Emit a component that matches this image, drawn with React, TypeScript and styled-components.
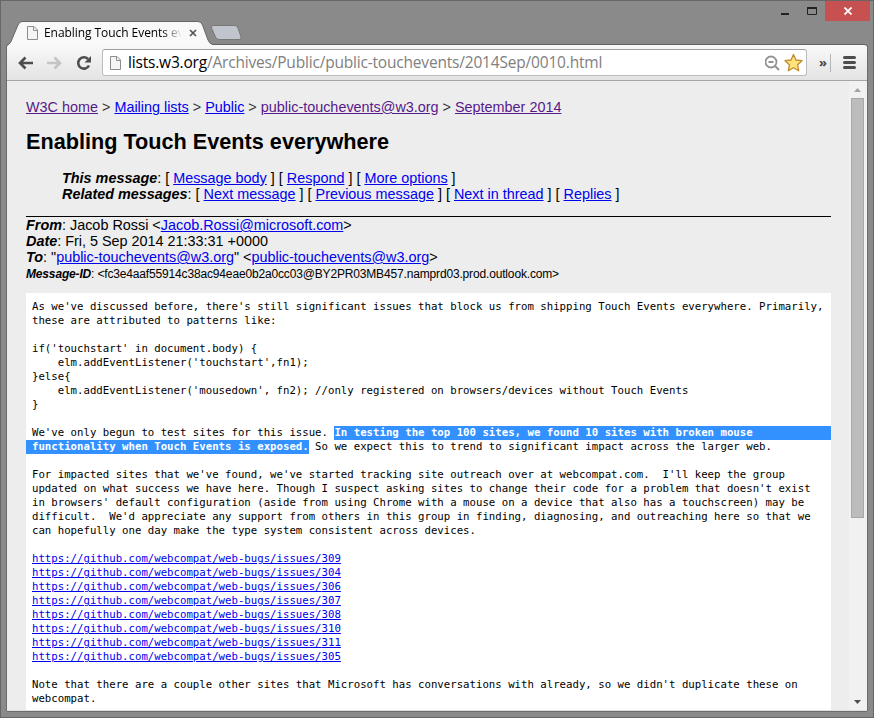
import React from 'react';
import styled, { createGlobalStyle, css } from 'styled-components';

const GlobalStyle = createGlobalStyle`
  * { box-sizing: border-box; }
  body { margin: 0; background: #8a8a8a; overflow: hidden; }
`;

const Window = styled.div`
  width: 874px;
  height: 718px;
  display: flex;
  flex-direction: column;
  padding: 0 6px 6px;
  background: #8a8a8a;
  border: 1px solid #666;
  overflow: hidden;
  font-family: "Liberation Sans", Arial, sans-serif;
`;

const TitleBar = styled.header`
  height: 43px;
  flex: none;
  display: flex;
  justify-content: space-between;
  align-items: flex-end;
`;

const Tabs = styled.div`
  display: flex;
  align-items: flex-end;
  height: 24px;
`;

const Tab = styled.div`
  position: relative;
  width: 205px;
  height: 24px;
  margin-bottom: -1px;
  padding: 0 0 0 19px;
  display: flex;
  align-items: center;
`;

const TabShape = styled.svg`
  position: absolute;
  left: 0;
  top: 0;
`;

const TabTitle = styled.span`
  position: relative;
  width: 137px;
  margin: 0 8px 0 5px;
  overflow: hidden;
  white-space: nowrap;
  font: 12px/18px "Open Sans", sans-serif;
  letter-spacing: -0.06px;
  color: #000;
  mask-image: linear-gradient(to right, #000 118px, transparent 138px);
`;

const Icon = styled.svg`
  position: relative;
  flex: none;
  display: block;
`;

const NewTab = styled.svg`
  margin: 0 0 3px -2px;
`;

const Controls = styled.div`
  display: flex;
  align-self: flex-start;
  margin-right: -3px;
`;

const Control = styled.div<{ $w: number; $close?: boolean }>`
  width: ${p => p.$w}px;
  height: 20px;
  display: flex;
  align-items: center;
  justify-content: center;
  background: ${p => (p.$close ? '#c75050' : 'transparent')};
`;

const Toolbar = styled.div`
  height: 37px;
  flex: none;
  display: flex;
  align-items: center;
  padding: 0 11px 0 11px;
  background: linear-gradient(#f9f9f9, #e3e3e3);
  border-top: 1px solid #636363;
  border-bottom: 1px solid #a5a5a5;
  border-radius: 3px 3px 0 0;
  box-shadow: -1px 0 #6c6c6c, 1px 0 #6c6c6c;
`;

const NavButtons = styled.div`
  display: flex;
  gap: 13px;
  align-items: center;
  width: 84px;
  flex: none;
`;

const Omnibox = styled.div`
  width: 705px;
  height: 27px;
  flex: none;
  display: flex;
  align-items: center;
  padding: 0 3px 0 6px;
  background: #fff;
  border: 1px solid #bdbdbd;
  border-top-color: #a0a0a0;
  border-radius: 3px;
`;

const Url = styled.span`
  flex: 1;
  margin-left: 6px;
  padding-bottom: 1px;
  white-space: nowrap;
  font: 15.5px/24px "Open Sans", sans-serif;
  letter-spacing: -0.19px;
  color: #808080;
  b { font-weight: 400; color: #000; }
`;

const Overflow = styled.span`
  width: 24px;
  padding: 0 0 1px 12px;
  font: bold 13px/16px "Open Sans", sans-serif;
  color: #444;
`;

const Divider = styled.i`
  width: 1px;
  height: 18px;
  margin: 0 12px 0 0;
  background: #b5b5b5;
`;

const Viewport = styled.div`
  flex: 1;
  min-height: 0;
  display: flex;
  background: #ededed;
  border-bottom: 1px solid #ddd;
  box-shadow: -1px 0 #6c6c6c, 1px 0 #6c6c6c, 0 1px #6c6c6c;
`;

const Page = styled.main`
  flex: 1;
  min-width: 0;
  padding: 18px 18px 0 19px;
  overflow: hidden;
  font-size: 14.4px;
  line-height: 16px;
  color: #000;
  white-space: nowrap;
`;

const Link = styled.a<{ $visited?: boolean }>`
  color: ${p => (p.$visited ? '#551a8b' : '#0000ee')};
  text-decoration: underline;
`;

const Crumbs = styled.nav`
  height: 16px;
  color: #333;
`;

const Title = styled.h1`
  margin: 14px 0 16px;
  font: bold 21.67px/25px "Liberation Sans", sans-serif;
`;

const MessageLinks = styled.div`
  padding-left: 36px;
  margin-bottom: 14px;
`;

const Headers = styled.div`
  border-top: 1px solid #000;
  margin-bottom: 12px;
`;

const Row = styled.div<{ $small?: boolean }>`
  height: 16px;
  ${p => p.$small && css`
    font-size: 12px;
    line-height: 18px;
    letter-spacing: -0.16px;
  `}
`;

const Label = styled.b`
  font-style: italic;
`;

const Body = styled.pre`
  margin: 0;
  height: 430px;
  padding: 7px 0 0 6px;
  background: #fff;
  font: 10.69px/14px "DejaVu Sans Mono", monospace;
`;

const Line = styled.div<{ $selectedEnd?: boolean; $selectedStart?: boolean }>`
  height: 14px;
  ${p => p.$selectedEnd && css`background: linear-gradient(#3390ff, #3390ff) 302px 0 no-repeat;`}
  ${p => p.$selectedStart && css`margin-left: -6px; padding-left: 6px; background: linear-gradient(#3390ff, #3390ff) 0 0 / 8px 14px no-repeat;`}
`;

const Selected = styled.strong`
  display: inline-block;
  height: 14px;
  background: #3390ff;
  color: #fff;
`;

const ScrollBar = styled.div`
  width: 18px;
  flex: none;
  padding: 0 3px 0 1px;
  display: flex;
  flex-direction: column;
  align-items: center;
  background: #f1f1f1;
`;

const ArrowBox = styled.div`
  height: 17px;
  display: flex;
  align-items: center;
`;

const Thumb = styled.div`
  width: 13px;
  height: 420px;
  margin-bottom: auto;
  background: #bcbcbc;
  border: 1px solid #a8a8a8;
`;

const PageIcon = () => (
  <Icon width="13" height="16" viewBox="0 0 13 16">
    <path d="M1.5 1.5h6.5l3.5 3.5v9.5h-10z" fill="#f5f5f5" stroke="#8d8d8d" />
    <path d="M7.5 1.5v4h4" fill="none" stroke="#8d8d8d" />
  </Icon>
);

const issues = [309, 304, 306, 307, 308, 310, 311, 305];

const intro = [
  "As we've discussed before, there's still significant issues that block us from shipping Touch Events everywhere. Primarily,",
  'these are attributed to patterns like:',
  '',
  "if('touchstart' in document.body) {",
  "    elm.addEventListener('touchstart',fn1);",
  '}else{',
  "    elm.addEventListener('mousedown', fn2); //only registered on browsers/devices without Touch Events",
  '}',
  '',
];

const outreach = [
  '',
  "For impacted sites that we've found, we've started tracking site outreach over at webcompat.com.  I'll keep the group",
  "updated on what success we have here. Though I suspect asking sites to change their code for a problem that doesn't exist",
  "in browsers' default configuration (aside from using Chrome with a mouse on a device that also has a touchscreen) may be",
  "difficult.  We'd appreciate any support from others in this group in finding, diagnosing, and outreaching here so that we",
  'can hopefully one day make the type system consistent across devices.',
  '',
];

const closing = [
  '',
  "Note that there are a couple other sites that Microsoft has conversations with already, so we didn't duplicate these on",
  'webcompat.',
];

const Lines = ({ text }: { text: string[] }) => <>{text.map((t, i) => <Line key={i}>{t}</Line>)}</>;

export default function App() {
  return (
    <Window>
      <GlobalStyle />
      <TitleBar>
        <Tabs>
          <Tab>
            <TabShape width="206" height="25" viewBox="0 0 206 25">
              <path d="M0 25V24.500C3 23 4 21 5 18L11 4Q12.500 .5 15 .5H191Q194 .5 195.500 4L201 19Q203 23.500 206 23.500V25Z" fill="#f9f9f9" />
              <path d="M0 24.500C3 23 4 21 5 18L11 4Q12.500 .5 15 .5H191Q194 .5 195.500 4L201 19Q203 23.500 206 23.500" fill="none" stroke="#666" />
            </TabShape>
            <PageIcon />
            <TabTitle>Enabling Touch Events everywhere</TabTitle>
            <Icon width="8" height="8" viewBox="0 0 8 8">
              <path d="M1 1l6 6M7 1l-6 6" stroke="#555" strokeWidth="1.700" />
            </Icon>
          </Tab>
          <NewTab width="32" height="16" viewBox="0 0 32 16">
            <path d="M3 .5H25Q27 .5 28 3L31 12Q31.500 14.500 29 14.500H9Q6.500 14.500 5.500 12L1.500 3Q1 .5 3 .5Z" fill="#c0c5cd" stroke="#777" />
          </NewTab>
        </Tabs>
        <Controls>
          <Control $w={27}>
            <svg width="8" height="8"><path d="M0 6h8v2H0z" fill="#222" /></svg>
          </Control>
          <Control $w={27}>
            <svg width="10" height="8"><path d="M.5 1h9v6.500h-9z" fill="none" stroke="#222" /><path d="M0 0h10v2H0z" fill="#222" /></svg>
          </Control>
          <Control $w={45} $close>
            <svg width="8" height="8"><path d="M.5 .5l7 7M7.500 .5l-7 7" stroke="#fff" strokeWidth="1.800" /></svg>
          </Control>
        </Controls>
      </TitleBar>
      <Toolbar>
        <NavButtons>
          <Icon width="16" height="14" viewBox="0 0 16 14">
            <path d="M7.500 1.500L2 7l5.500 5.500M2 7h13" fill="none" stroke="#4d4d4d" strokeWidth="2.600" />
          </Icon>
          <Icon width="16" height="14" viewBox="0 0 16 14">
            <path d="M7.500 1.500L13 7l-5.500 5.500M13 7H0" fill="none" stroke="#c4c4c4" strokeWidth="2.600" />
          </Icon>
          <Icon width="16" height="16" viewBox="0 0 16 16">
            <path d="M13 10.500A5.700 5.700 0 1 1 12 4" fill="none" stroke="#4d4d4d" strokeWidth="2.600" />
            <path d="M15 1v6.500H8.500z" fill="#4d4d4d" />
          </Icon>
        </NavButtons>
        <Omnibox>
          <PageIcon />
          <Url><b>lists.w3.org</b>/Archives/Public/public-touchevents/2014Sep/0010.html</Url>
          <Icon width="16" height="16" viewBox="0 0 16 16">
            <circle cx="6" cy="7" r="5.500" fill="none" stroke="#929292" strokeWidth="1.800" />
            <path d="M3.500 7h5M10 11l4 4" stroke="#929292" strokeWidth="2" />
          </Icon>
          <Icon width="22" height="20" viewBox="0 0 22 20">
            <path d="M12.500 1.500l2.500 5.500 6 .7-4.400 4.100 1.100 6-5.200-3-5.200 3 1.100-6L4 7.700l6-.7z" fill="#ffe27a" stroke="#c18b32" strokeWidth="1.300" strokeLinejoin="round" />
          </Icon>
        </Omnibox>
        <Overflow>»</Overflow>
        <Divider />
        <Icon width="13" height="13" viewBox="0 0 13 13">
          <path d="M1.500 1.500h10M1.500 6.500h10M1.500 11.500h10" stroke="#4d4d4d" strokeWidth="3" strokeLinecap="round" />
        </Icon>
      </Toolbar>
      <Viewport>
        <Page>
          <Crumbs>
            <Link $visited>W3C home</Link> &gt; <Link>Mailing lists</Link> &gt; <Link>Public</Link> &gt;{' '}
            <Link $visited>public-touchevents@w3.org</Link> &gt; <Link $visited>September 2014</Link>
          </Crumbs>
          <Title>Enabling Touch Events everywhere</Title>
          <MessageLinks>
            <Row><Label>This message</Label>: [ <Link>Message body</Link> ] [ <Link>Respond</Link> ] [ <Link>More options</Link> ]</Row>
            <Row><Label>Related messages</Label>: [ <Link>Next message</Link> ] [ <Link>Previous message</Link> ] [ <Link>Next in thread</Link> ] [ <Link>Replies</Link> ]</Row>
          </MessageLinks>
          <Headers>
            <Row><Label>From</Label>: Jacob Rossi &lt;<Link>Jacob.Rossi@microsoft.com</Link>&gt;</Row>
            <Row><Label>Date</Label>: Fri, 5 Sep 2014 21:33:31 +0000</Row>
            <Row><Label>To</Label>: "<Link>public-touchevents@w3.org</Link>" &lt;<Link>public-touchevents@w3.org</Link>&gt;</Row>
            <Row $small><Label>Message-ID</Label>: &lt;fc3e4aaf55914c38ac94eae0b2a0cc03@BY2PR03MB457.namprd03.prod.outlook.com&gt;</Row>
          </Headers>
          <Body>
            <Lines text={intro} />
            <Line $selectedEnd>We've only begun to test sites for this issue. <Selected>In testing the top 100 sites, we found 10 sites with broken mouse</Selected></Line>
            <Line $selectedStart><Selected>functionality when Touch Events is exposed.</Selected> So we expect this to trend to significant impact across the larger web.</Line>
            <Lines text={outreach} />
            {issues.map(n => <Line key={n}><Link>https://github.com/webcompat/web-bugs/issues/{n}</Link></Line>)}
            <Lines text={closing} />
          </Body>
        </Page>
        <ScrollBar>
          <ArrowBox><svg width="7" height="4"><path d="M0 4h7L3.500 0z" fill="#a3a3a3" /></svg></ArrowBox>
          <Thumb />
          <ArrowBox><svg width="7" height="4"><path d="M0 0h7L3.500 4z" fill="#505050" /></svg></ArrowBox>
        </ScrollBar>
      </Viewport>
    </Window>
  );
}
